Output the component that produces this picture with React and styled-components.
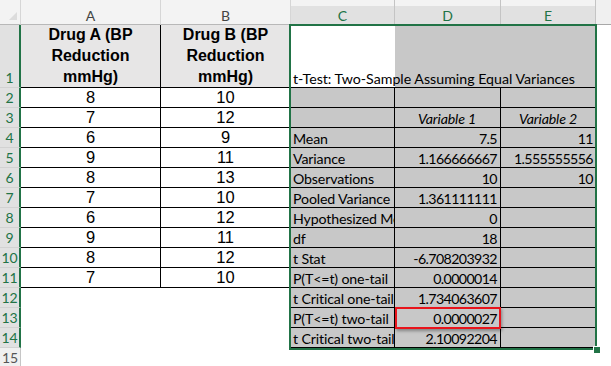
import * as React from 'react';
import styled, { createGlobalStyle, css } from 'styled-components';


const GlobalStyle = createGlobalStyle`
  html, body {
    margin: 0;
    padding: 0;
    background: #ffffff;
    overflow: hidden;
  }
`;

const green = '#217346';
const calibri = `Lato, "Open Sans", sans-serif`;

const Sheet = styled.div`
  display: grid;
  grid-template-columns: 21px 140px 130px 104px 106px 95px 1fr;
  grid-template-rows: 25px 63px repeat(14, 20px) 20px;
  width: 611px;
  height: 366px;
  overflow: hidden;
  background: #ffffff;
`;

const place = css`
  grid-column: ${ (p) => p.$col };
  grid-row: ${ (p) => p.$row };
`;

const Corner = styled.div`
  ${ place };
  box-sizing: border-box;
  position: relative;
  background: #f3f3f3;
  border-right: 1px solid #d6d6d6;
  border-bottom: 1px solid #b8b8b8;

  &::after {
    content: '';
    position: absolute;
    right: 3px;
    bottom: 4px;
    width: 0;
    height: 0;
    border-left: 8px solid transparent;
    border-bottom: 8px solid #dcdcdc;
  }
`;

const ColHeader = styled.div`
  ${ place };
  box-sizing: border-box;
  display: flex;
  align-items: center;
  justify-content: center;
  padding-top: 6px;
  font-family: ${ calibri };
  font-size: 14px;
  color: ${ (p) => (p.$selected ? green : '#444444') };
  background: ${ (p) => (p.$selected ? 'linear-gradient(#f3f3f3 0 6px, #e1e1e1 6px)' : '#f3f3f3') };
  border-right: 1px solid ${ (p) => (p.$selected ? '#c4c4c4' : '#d6d6d6') };
  border-bottom: 1px solid #b8b8b8;
`;

const HeaderFill = styled.div`
  ${ place };
  box-sizing: border-box;
  background: #f0f0f0;
  border-bottom: 1px solid #a8a8a8;
`;

const RowHeader = styled.div`
  ${ place };
  box-sizing: border-box;
  display: flex;
  align-items: ${ (p) => (p.$tall ? 'flex-end' : 'center') };
  justify-content: center;
  padding-bottom: ${ (p) => (p.$tall ? '1px' : '0') };
  font-family: ${ calibri };
  font-size: 14px;
  color: ${ (p) => (p.$selected ? green : '#555555') };
  background: ${ (p) => (p.$selected ? '#e1e1e1' : '#f0f0f0') };
  border-bottom: 1px solid #d2d2d2;
  border-right: ${ (p) => (p.$selected ? `2px solid ${ green }` : '1px solid #c6c6c6') };
`;

const DataCell = styled.div`
  ${ place };
  box-sizing: border-box;
  display: flex;
  align-items: flex-end;
  justify-content: center;
  font-family: "Liberation Sans", Arial, sans-serif;
  font-size: ${ (p) => (p.$head ? '16px' : '16.5px') };
  font-weight: ${ (p) => (p.$head ? 700 : 400) };
  line-height: ${ (p) => (p.$head ? '21px' : '19px') };
  text-align: center;
  color: #000000;
  background: ${ (p) => (p.$head ? '#e7e6e6' : '#ffffff') };
  border-right: 1px solid #000000;
  border-bottom: 1px solid #000000;
  overflow: hidden;
`;

const TitleCell = styled.div`
  ${ place };
  box-sizing: border-box;
  display: flex;
  align-items: flex-end;
  padding: 0 0 0 2px;
  font-family: ${ calibri };
  font-size: 14.2px;
  line-height: 17px;
  color: #000000;
  white-space: nowrap;
  background: linear-gradient(to right, #ffffff 104px, #c8c8c8 104px);
  border-bottom: 1px solid #000000;
`;

const StatCell = styled.div`
  ${ place };
  box-sizing: border-box;
  display: flex;
  align-items: flex-end;
  justify-content: ${ (p) => p.$align };
  padding: 0 3px 0 2px;
  font-family: ${ calibri };
  font-size: 14.2px;
  font-style: ${ (p) => (p.$italic ? 'italic' : 'normal') };
  letter-spacing: ${ (p) => (p.$num ? '-0.6px' : '-0.15px') };
  line-height: 16px;
  color: #000000;
  white-space: nowrap;
  overflow: hidden;
  background: #c8c8c8;
  border-bottom: 1px solid #000000;
  border-right: ${ (p) => (p.$last ? 'none' : '1px solid #000000') };
`;

const Selection = styled.div`
  ${ place };
  position: relative;
  margin: -1px -1px -2px -2px;
  border: 2px solid ${ green };
  pointer-events: none;
`;

const FillHandle = styled.div`
  position: absolute;
  right: -5px;
  bottom: -5px;
  width: 6px;
  height: 6px;
  background: ${ green };
  border-top: 1px solid #ffffff;
  border-left: 1px solid #ffffff;
`;

const Highlight = styled.div`
  ${ place };
  margin: -1px 0 -1px 0;
  border: 2px solid #e8141b;
  box-shadow: 1px 2px 3px rgba(0, 0, 0, 0.35);
  pointer-events: none;
`;


const drugA = [8, 7, 6, 9, 8, 7, 6, 9, 8, 7];
const drugB = [10, 12, 9, 11, 13, 10, 12, 11, 12, 10];

const stats = [
  ['', '', ''],
  ['', 'Variable 1', 'Variable 2'],
  ['Mean', '7.5', '11'],
  ['Variance', '1.166666667', '1.555555556'],
  ['Observations', '10', '10'],
  ['Pooled Variance', '1.361111111', ''],
  ['Hypothesized Mean Difference', '0', ''],
  ['df', '18', ''],
  ['t Stat', '-6.708203932', ''],
  ['P(T<=t) one-tail', '0.0000014', ''],
  ['t Critical one-tail', '1.734063607', ''],
  ['P(T<=t) two-tail', '0.0000027', ''],
  ['t Critical two-tail', '2.10092204', ''],
];

const columns = ['A', 'B', 'C', 'D', 'E'];


const App = () => (
  <>
    <GlobalStyle />
    <Sheet>
      <Corner $col={ 1 } $row={ 1 } />
      { columns.map((letter, i) => (
        <ColHeader key={ letter } $col={ i + 2 } $row={ 1 } $selected={ i >= 2 }>{ letter }</ColHeader>
      )) }
      <HeaderFill $col={ 7 } $row={ 1 } />

      { Array.from({ length: 15 }, (_, i) => (
        <RowHeader key={ i } $col={ 1 } $row={ i + 2 } $selected={ i < 14 } $tall={ i === 0 }>{ i + 1 }</RowHeader>
      )) }

      <DataCell $col={ 2 } $row={ 2 } $head>Drug A (BP<br />Reduction<br />mmHg)</DataCell>
      <DataCell $col={ 3 } $row={ 2 } $head>Drug B (BP<br />Reduction<br />mmHg)</DataCell>
      { drugA.map((value, i) => (
        <React.Fragment key={ i }>
          <DataCell $col={ 2 } $row={ i + 3 }>{ value }</DataCell>
          <DataCell $col={ 3 } $row={ i + 3 }>{ drugB[i] }</DataCell>
        </React.Fragment>
      )) }

      <TitleCell $col="4 / 7" $row={ 2 }>t-Test: Two-Sample Assuming Equal Variances</TitleCell>
      { stats.map(([label, v1, v2], i) => {
        const head = i === 1;
        return (
          <React.Fragment key={ i }>
            <StatCell $col={ 4 } $row={ i + 3 } $align="flex-start">{ label }</StatCell>
            <StatCell $col={ 5 } $row={ i + 3 } $align={ head ? 'center' : 'flex-end' } $italic={ head } $num={ !head }>{ v1 }</StatCell>
            <StatCell $col={ 6 } $row={ i + 3 } $align={ head ? 'center' : 'flex-end' } $italic={ head } $num={ !head } $last>{ v2 }</StatCell>
          </React.Fragment>
        );
      }) }

      <Highlight $col={ 5 } $row={ 14 } />
      <Selection $col="4 / 7" $row="2 / 16">
        <FillHandle />
      </Selection>
    </Sheet>
  </>
);

export default App;
